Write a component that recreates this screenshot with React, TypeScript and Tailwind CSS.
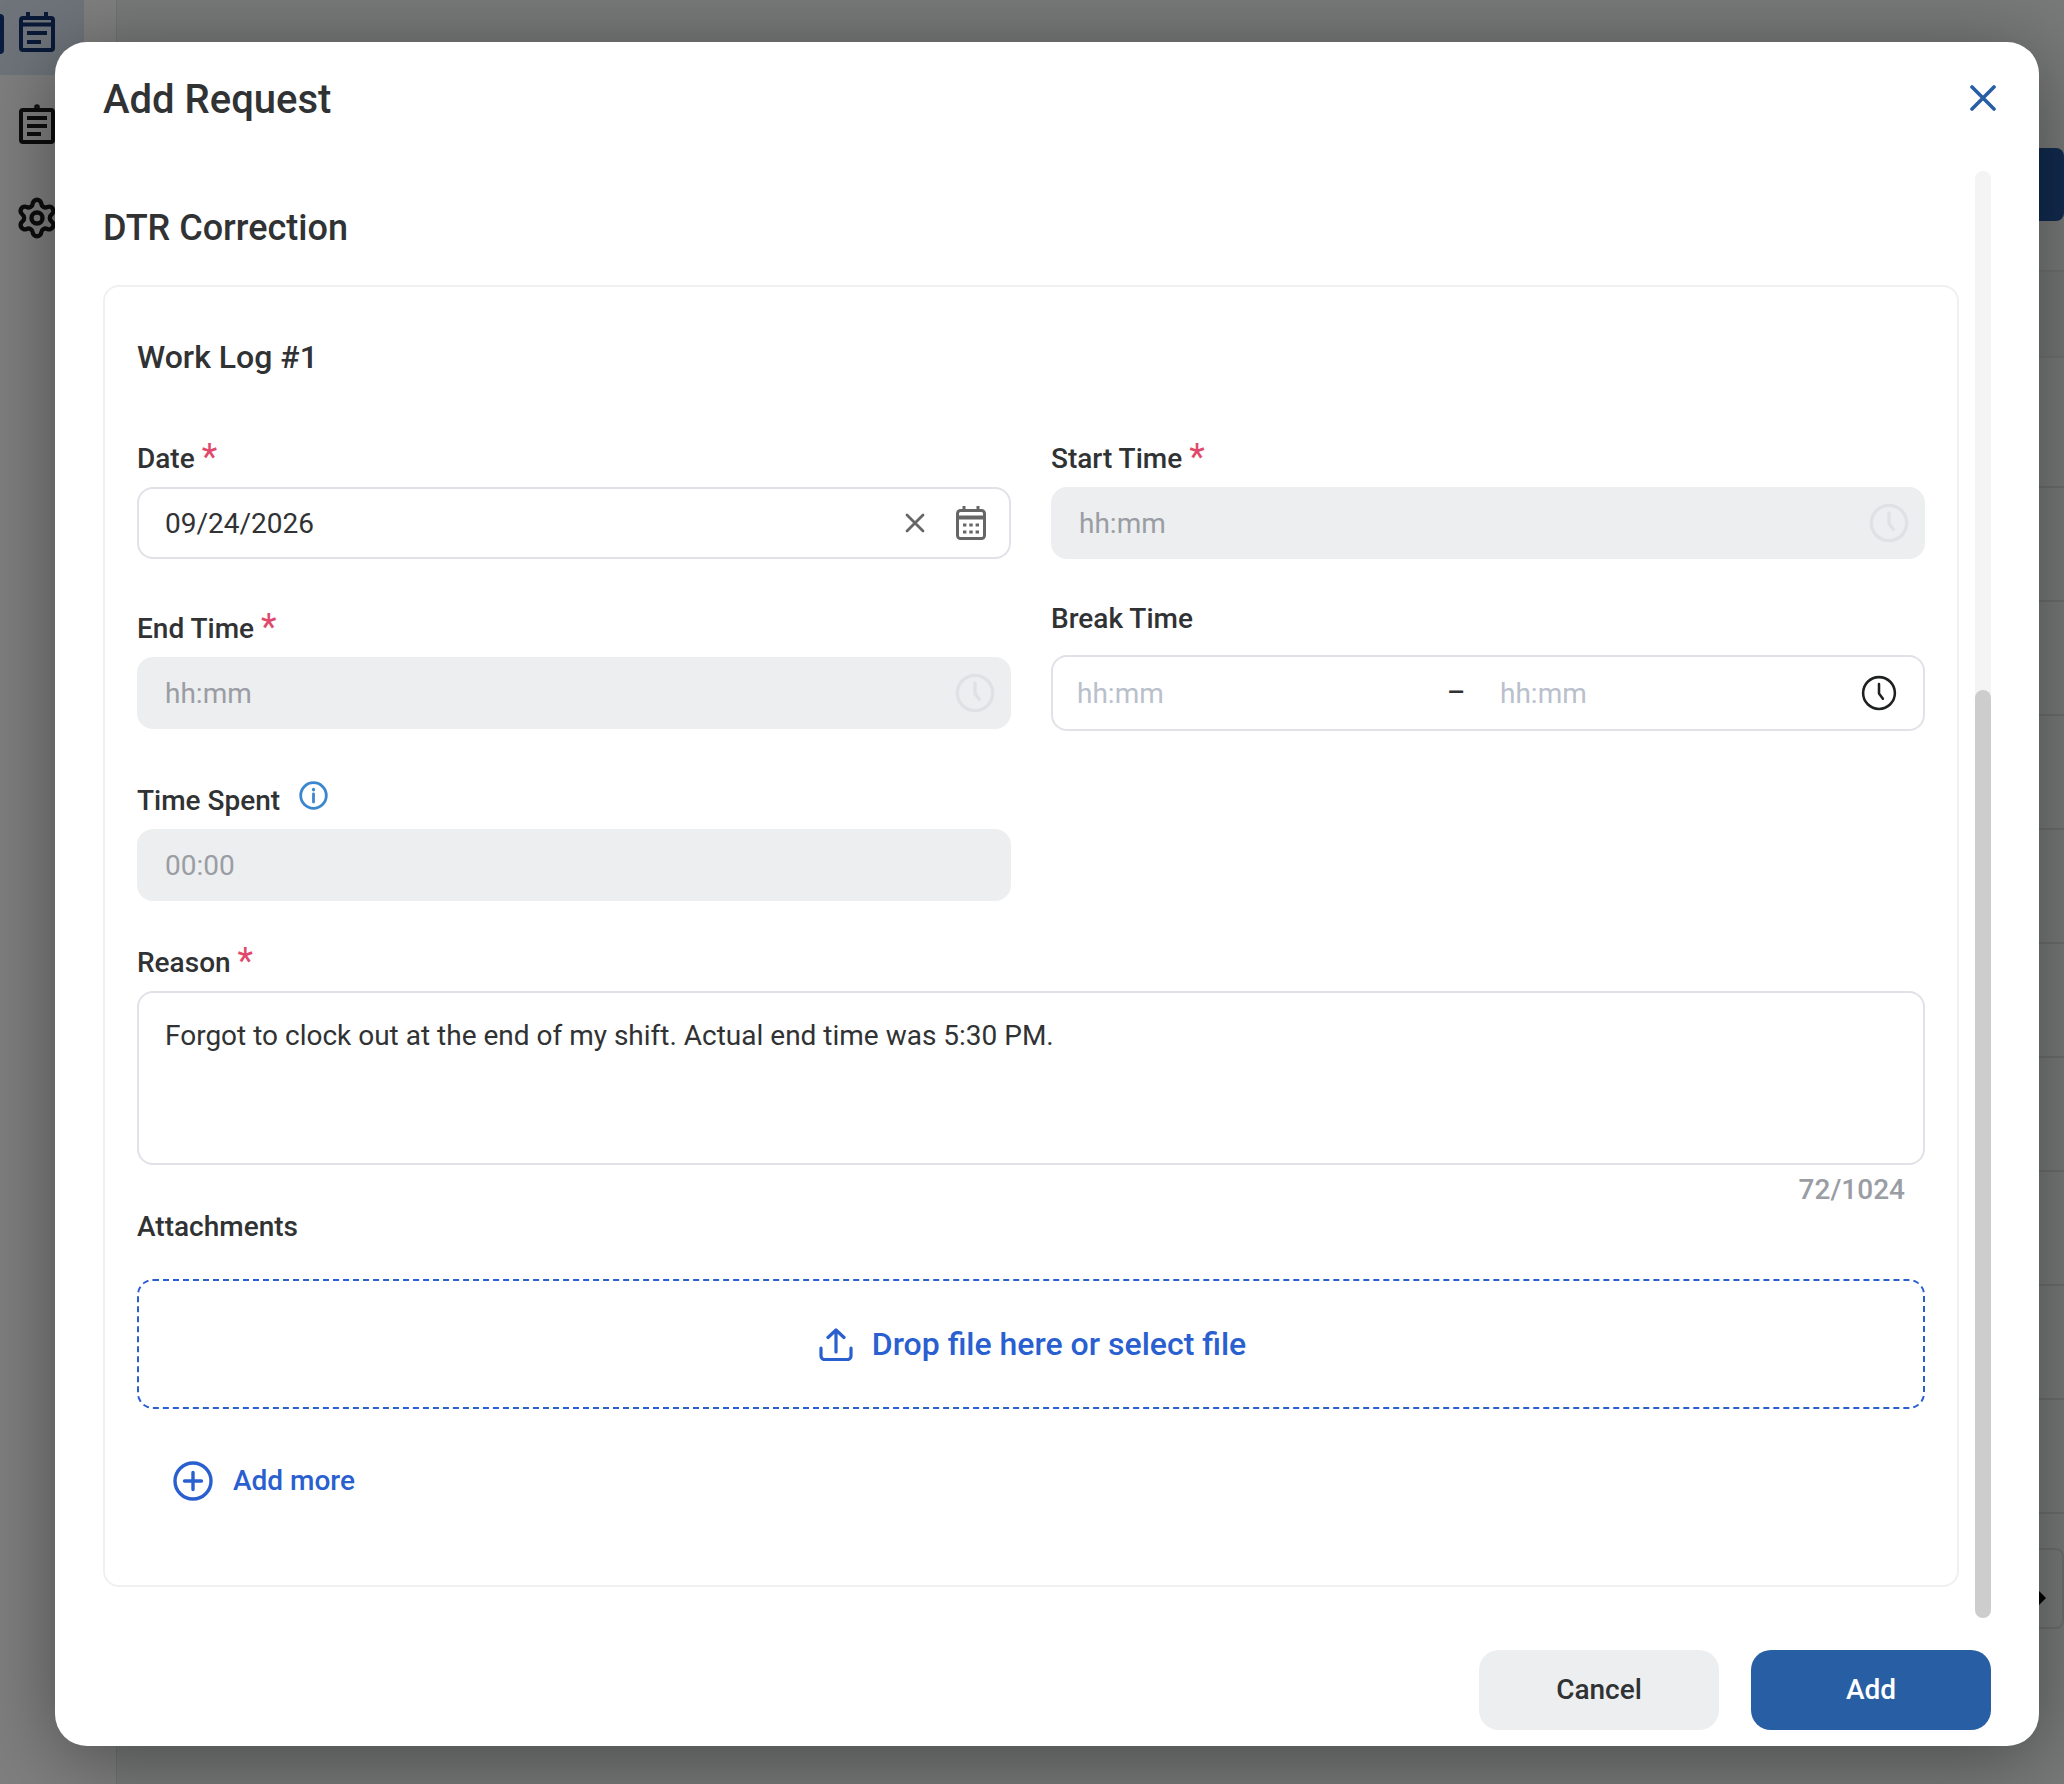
import React from 'react';
import { Settings } from 'lucide-react';

const Req = () => (
  <span className="ml-[7px] self-start text-[36px] leading-[30px] font-normal text-[#e0496b]">*</span>
);

const Label: React.FC<{ text: string; required?: boolean }> = ({ text, required }) => (
  <div className="flex h-9 items-center pt-[2px] text-[28px] leading-9 font-medium text-[#303234]">
    <span>{text}</span>
    {required && <Req />}
  </div>
);

const ClockIcon: React.FC<{ size: number; color: string; sw?: number }> = ({ size, color, sw = 1.8 }) => (
  <svg width={size} height={size} viewBox="0 0 24 24" fill="none" stroke={color} strokeWidth={sw} strokeLinecap="round" strokeLinejoin="round">
    <circle cx="12" cy="12" r="10.6" />
    <path d="M12 6v6.4l2.6 3.4" />
  </svg>
);

const DisabledField: React.FC<{ value: string; clock?: boolean }> = ({ value, clock }) => (
  <div className="mt-[11px] flex h-[72px] items-center justify-between rounded-2xl bg-[#edeef0] pr-4 pl-7">
    <span className="mt-[2px] text-[28px] text-[#9a9da3]">{value}</span>
    {clock && <ClockIcon size={40} color="#dfe1e5" sw={2} />}
  </div>
);

const CalendarDocIcon = () => (
  <svg width="36" height="40" viewBox="0 0 36 40" fill="none" stroke="#12326f" strokeWidth="4" strokeLinejoin="round">
    <rect x="2" y="6" width="32" height="32" rx="2" />
    <path d="M9 0v6M27 0v6M2 12.5h32" />
    <path d="M8 21h20M8 30h14" />
  </svg>
);

const ClipboardIcon = () => (
  <svg width="36" height="40" viewBox="0 0 36 40" fill="none" stroke="#1a1a1a" strokeWidth="4" strokeLinejoin="round">
    <rect x="2" y="6" width="32" height="32" rx="2" />
    <circle cx="18" cy="3" r="1.6" strokeWidth="2.4" />
    <path d="M8 14h20M8 22h20M8 30h14" />
  </svg>
);

const DateCalendarIcon = () => (
  <svg width="30" height="34" viewBox="0 0 30 34" fill="none" stroke="#666666" strokeWidth="3" strokeLinejoin="round">
    <rect x="1.5" y="4.5" width="27" height="28" rx="3" />
    <path d="M8 0v6M22 0v6" />
    <path d="M1.5 11.5h27" strokeWidth="4" />
    <path d="M7 19h3.4M13.3 19h3.4M19.6 19h3.4M7 26h3.4M13.3 26h3.4M19.6 26h3.4" strokeWidth="3.2" />
  </svg>
);

const UploadIcon = () => (
  <svg width="34" height="33" viewBox="0 0 34 33" fill="none" stroke="#2a5fd0" strokeWidth="3.2" strokeLinecap="round" strokeLinejoin="round">
    <path d="M17 24V2M9 9.5 17 2l8 7.5" />
    <path d="M2 20v8a3.5 3.5 0 0 0 3.5 3.5h23A3.5 3.5 0 0 0 32 28v-8" />
  </svg>
);

export default function App() {
  return (
    <div className="relative flex h-[1784px] w-[2064px] overflow-hidden bg-white font-['Roboto',sans-serif]">
      {/* page behind the dialog */}
      <aside className="w-[117px] shrink-0 border-r border-[#e4e4e4] bg-white">
        <div className="relative h-[75px] w-[84px] rounded-br-lg bg-[#dde8f5] pt-3 pl-[19px]">
          <div className="absolute top-[14px] left-0 h-10 w-1 rounded-r bg-[#123a7d]" />
          <CalendarDocIcon />
        </div>
        <div className="mt-[29px] pl-[19px]">
          <ClipboardIcon />
        </div>
        <div className="mt-[52px] pl-[15px]">
          <Settings size={44} color="#1a1a1a" strokeWidth={2.4} />
        </div>
      </aside>
      <main className="flex-1 bg-[#f0f4f2] pt-[148px]">
        <div className="flex justify-end">
          <div className="h-[73px] w-[220px] rounded-lg bg-[#24569f]" />
        </div>
        <div className="mt-[49px] h-[88px] border-y-2 border-[#e2e2e2] bg-[#eaecec]" />
        <div className="h-[130px] border-b-2 border-[#dcdcdc]" />
        {[0, 1, 2, 3, 4, 5, 6, 7, 8].map((i) => (
          <div key={i} className="h-[114px] border-b-2 border-[#dcdcdc]" />
        ))}
        <div className="mt-[34px] flex justify-end">
          <div className="flex h-[81px] w-[200px] items-center rounded-lg border-2 border-[#dcdcdc] pl-[172px]">
            <div className="mt-[18px] h-0 w-0 border-y-[8px] border-l-[8px] border-y-transparent border-l-black" />
          </div>
        </div>
      </main>

      {/* overlay + dialog */}
      <div className="absolute inset-0 bg-black/50" />
      <div className="absolute top-[42px] left-[55px] flex h-[1704px] w-[1984px] flex-col rounded-[32px] bg-white shadow-[0_12px_80px_rgba(0,0,0,0.4)]">
        <header className="flex h-[129px] shrink-0 items-start justify-between pt-[34px] pr-[43px] pl-[48px]">
          <h2 className="text-[40px] leading-[48px] font-medium text-[#303234]">Add Request</h2>
          <button className="mt-[9px]">
            <svg width="26" height="26" viewBox="0 0 26 26" fill="none" stroke="#285ea3" strokeWidth="3.6" strokeLinecap="round">
              <path d="M2 2l22 22M24 2 2 24" />
            </svg>
          </button>
        </header>

        <div className="flex min-h-0 flex-1 gap-4 pr-[48px] pl-[48px]">
          <div className="flex-1">
            <h3 className="mt-[33px] mb-[33px] text-[36px] leading-[48px] font-medium text-[#303234]">DTR Correction</h3>
            <section className="rounded-2xl border-2 border-[#f0f0f0] px-8 pt-[50px] pb-[84px]">
              <h4 className="mb-[63px] text-[32px] leading-10 font-medium text-[#303234]">Work Log #1</h4>

              <div className="grid grid-cols-2 gap-x-10">
                <div>
                  <Label text="Date" required />
                  <div className="mt-[11px] flex h-[72px] items-center justify-between rounded-2xl border-2 border-[#e1e2e8] pr-[23px] pl-[26px]">
                    <span className="mt-[2px] text-[28px] text-[#303234]">09/24/2026</span>
                    <div className="flex items-center gap-[31px]">
                      <svg width="20" height="20" viewBox="0 0 20 20" fill="none" stroke="#666666" strokeWidth="2.8" strokeLinecap="round">
                        <path d="M2 2l16 16M18 2 2 18" />
                      </svg>
                      <DateCalendarIcon />
                    </div>
                  </div>
                </div>
                <div>
                  <Label text="Start Time" required />
                  <DisabledField value="hh:mm" clock />
                </div>
              </div>

              <div className="mt-[41px] grid grid-cols-2 gap-x-10">
                <div className="mt-[10px]">
                  <Label text="End Time" required />
                  <DisabledField value="hh:mm" clock />
                </div>
                <div>
                  <Label text="Break Time" />
                  <div className="mt-[19px] flex h-[76px] items-center rounded-2xl border-2 border-[#e1e2e8] pr-[26px] pl-6">
                    <span className="mt-[2px] w-[370px] text-[28px] text-[#b9c0cb]">hh:mm</span>
                    <span className="w-[53px] text-[28px] font-medium text-[#303234]">–</span>
                    <span className="mt-[2px] flex-1 text-[28px] text-[#b9c0cb]">hh:mm</span>
                    <ClockIcon size={36} color="#1f2022" sw={1.7} />
                  </div>
                </div>
              </div>

              <div className="mt-[51px] grid grid-cols-2 gap-x-10">
                <div>
                  <div className="flex h-9 items-center pt-[2px] text-[28px] leading-9 font-medium text-[#303234]">
                    <span>Time Spent</span>
                    <svg className="mt-[-12px] ml-[19px]" width="29" height="29" viewBox="0 0 29 29" fill="none" stroke="#3a87cf" strokeWidth="2.8" strokeLinecap="round">
                      <circle cx="14.5" cy="14.5" r="12.8" />
                      <path d="M14.5 13v8" />
                      <path d="M14.5 8.4v.4" strokeWidth="3.2" />
                    </svg>
                  </div>
                  <DisabledField value="00:00" />
                </div>
              </div>

              <div className="mt-[43px]">
                <Label text="Reason" required />
                <div className="mt-[11px] h-[174px] rounded-2xl border-2 border-[#e1e2e8] px-[26px] pt-[25px] text-[28px] leading-9 text-[#303234]">
                  Forgot to clock out at the end of my shift. Actual end time was 5:30 PM.
                </div>
                <div className="mt-[7px] pr-[20px] text-right text-[28px] leading-9 font-medium text-[#9a9da3]">72/1024</div>
              </div>

              <div>
                <Label text="Attachments" />
                <div className="mt-[35px] flex h-[130px] items-center justify-center gap-[19px] rounded-2xl border-2 border-dashed border-[#2a5fd0] pl-[3px] text-[32px] font-medium text-[#2a5fd0]">
                  <UploadIcon />
                  <span>Drop file here or select file</span>
                </div>
              </div>

              <div className="mt-[52px] ml-[36px] flex h-10 items-center gap-[20px] text-[28px] font-medium text-[#2a5fd0]">
                <svg width="40" height="40" viewBox="0 0 40 40" fill="none" stroke="#2a5fd0" strokeWidth="3.4" strokeLinecap="round">
                  <circle cx="20" cy="20" r="18" />
                  <path d="M20 11.5v17M11.5 20h17" />
                </svg>
                <span>Add more</span>
              </div>
            </section>
          </div>

          <div className="flex w-4 shrink-0 flex-col justify-end rounded-full bg-[#f4f4f4]">
            <div className="h-[928px] rounded-full bg-[#cdcdcd]" />
          </div>
        </div>

        <footer className="flex shrink-0 justify-end gap-8 pt-8 pr-[48px] pb-4">
          <button className="h-20 w-[240px] rounded-[20px] bg-[#edeef0] text-[28px] font-medium text-[#303234]">Cancel</button>
          <button className="h-20 w-[240px] rounded-[20px] bg-[#285ea3] text-[28px] font-medium text-white">Add</button>
        </footer>
      </div>
    </div>
  );
}
